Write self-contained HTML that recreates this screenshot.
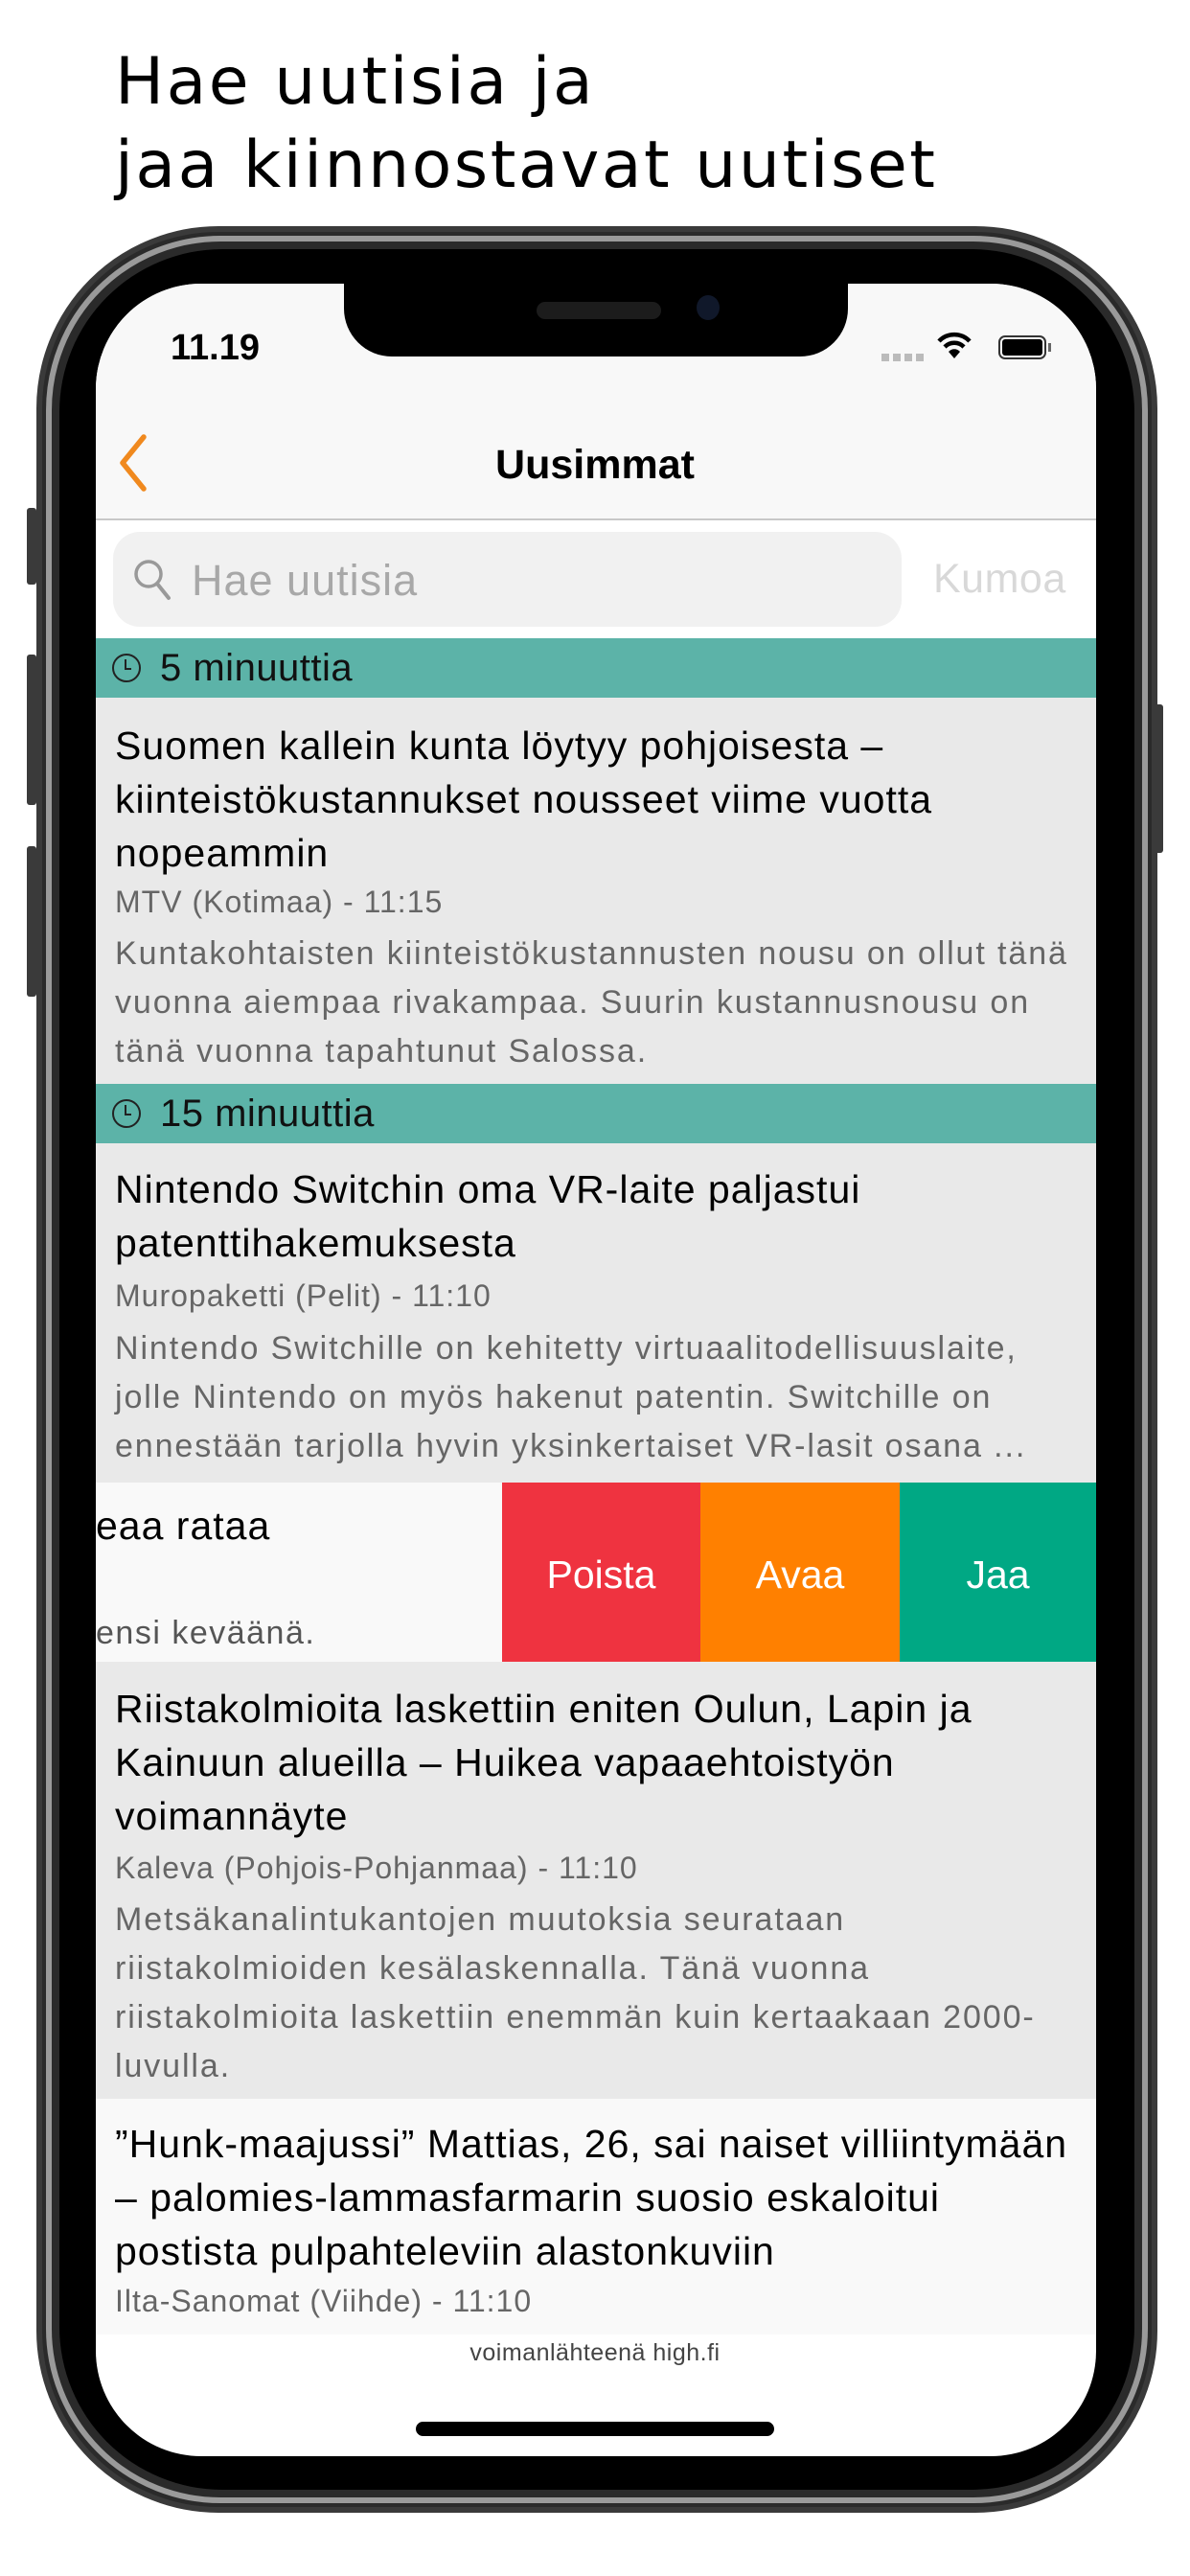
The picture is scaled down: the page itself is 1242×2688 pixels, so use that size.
<!DOCTYPE html>
<html><head><meta charset="utf-8"><style>
*{margin:0;padding:0;box-sizing:border-box}
body{width:1242px;height:2688px;background:#fff;position:relative;overflow:hidden;font-family:"Liberation Sans",sans-serif}
.a{position:absolute}
.h{font-family:"DejaVu Sans",sans-serif;font-size:68px;color:#000;left:120px;white-space:nowrap;letter-spacing:2.5px}
.t{font-size:41px;letter-spacing:1px;color:#000;line-height:56px;left:120px;white-space:nowrap}
.s{font-size:32px;letter-spacing:1px;color:#666;left:120px;white-space:nowrap}
.d{font-size:34px;letter-spacing:1.9px;color:#666;line-height:51px;left:120px;white-space:nowrap}
.sec{left:100px;width:1044px;background:#5cb3a8;height:62px}
.sec span{position:absolute;left:67px;top:9px;font-size:40px;color:#111;letter-spacing:.5px}
.clk{position:absolute;left:17px;top:16px;width:30px;height:30px;border:2.5px solid #222;border-radius:50%}
.clk:after{content:"";position:absolute;left:11px;top:4px;width:5px;height:9px;border-left:2.5px solid #222;border-bottom:2.5px solid #222}
.btn{top:1547px;height:187px;color:#fff;font-size:41px;display:flex;align-items:center;justify-content:center;padding-top:6px}
.sb{background:#3a3a3a;width:10px;border-radius:3px}
</style></head><body>
<div class="a h" style="top:46px">Hae uutisia ja</div>
<div class="a h" style="top:133px">jaa kiinnostavat uutiset</div>

<div class="a sb" style="left:28px;top:530px;height:80px"></div>
<div class="a sb" style="left:28px;top:683px;height:157px"></div>
<div class="a sb" style="left:28px;top:883px;height:157px"></div>
<div class="a sb" style="left:1204px;top:735px;height:155px"></div>

<div class="a" style="left:38px;top:236px;width:1170px;height:2386px;border-radius:190px;background:#2a2a2a;border:6px solid #3a3a3a"></div>
<div class="a" style="left:48px;top:246px;width:1150px;height:2366px;border-radius:182px;border:6px solid #9a9a9a"></div>
<div class="a" style="left:62px;top:260px;width:1122px;height:2338px;border-radius:170px;background:#000"></div>
<div class="a" style="left:100px;top:296px;width:1044px;height:2267px;border-radius:110px;background:#fff;overflow:hidden">
  <div class="a" style="left:0;top:0;width:1044px;height:247px;background:#f8f8f8;border-bottom:2px solid #c8c8c8"></div>
</div>
<div class="a" style="left:359px;top:290px;width:526px;height:82px;background:#000;border-radius:0 0 50px 50px"></div>
<div class="a" style="left:560px;top:315px;width:130px;height:18px;background:#1c1c1c;border-radius:9px"></div>
<div class="a" style="left:727px;top:308px;width:24px;height:26px;background:#10182a;border-radius:50%"></div>

<div class="a" style="left:178px;top:342px;font-size:38px;font-weight:bold;color:#000">11.19</div>
<div class="a" style="left:920px;top:369px;width:46px;height:8px;background:repeating-linear-gradient(90deg,#bbb 0 8px,transparent 8px 12px)"></div>
<svg class="a" style="left:978px;top:346px" width="36" height="30" viewBox="0 0 36 30"><path d="M2 10 A22 22 0 0 1 34 10" stroke="#000" stroke-width="4.5" fill="none"/><path d="M8 16 A14 14 0 0 1 28 16" stroke="#000" stroke-width="4.5" fill="none"/><path d="M18 28 L12 21 A8 8 0 0 1 24 21Z" fill="#000"/></svg>
<div class="a" style="left:1042px;top:350px;width:50px;height:25px;border:2.5px solid #333;border-radius:7px;padding:2px"><div style="width:100%;height:100%;background:#000;border-radius:3px"></div></div>
<div class="a" style="left:1094px;top:358px;width:3px;height:9px;background:#666"></div>

<svg class="a" style="left:120px;top:452px" width="36" height="62" viewBox="0 0 36 62"><path d="M30 4 L8 31 L30 58" stroke="#f0891e" stroke-width="5.5" fill="none" stroke-linecap="round" stroke-linejoin="round"/></svg>
<div class="a" style="left:0;width:1242px;text-align:center;top:461px;font-size:43px;font-weight:bold;color:#000">Uusimmat</div>

<div class="a" style="left:118px;top:555px;width:823px;height:99px;background:#f1f1f1;border-radius:28px"></div>
<svg class="a" style="left:138px;top:582px" width="44" height="46" viewBox="0 0 44 46"><circle cx="17" cy="17" r="13" stroke="#999" stroke-width="3.5" fill="none"/><path d="M26 27 L38 42" stroke="#999" stroke-width="4" stroke-linecap="round"/></svg>
<div class="a" style="left:200px;top:580px;font-size:45px;color:#a8a8a8;letter-spacing:1px">Hae uutisia</div>
<div class="a" style="left:974px;top:580px;font-size:43px;color:#d8d8d8;letter-spacing:.5px">Kumoa</div>

<div class="a sec" style="top:666px"><div class="clk"></div><span>5 minuuttia</span></div>
<div class="a" style="left:100px;top:728px;width:1044px;height:403px;background:#e9e9e9"></div>
<div class="a t" style="top:750px">Suomen kallein kunta löytyy pohjoisesta –<br>kiinteistökustannukset nousseet viime vuotta<br>nopeammin</div>
<div class="a s" style="top:923px">MTV (Kotimaa) - 11:15</div>
<div class="a d" style="top:970px">Kuntakohtaisten kiinteistökustannusten nousu on ollut tänä<br>vuonna aiempaa rivakampaa. Suurin kustannusnousu on<br>tänä vuonna tapahtunut Salossa.</div>

<div class="a sec" style="top:1131px"><div class="clk"></div><span>15 minuuttia</span></div>
<div class="a" style="left:100px;top:1193px;width:1044px;height:354px;background:#e9e9e9"></div>
<div class="a t" style="top:1213px">Nintendo Switchin oma VR-laite paljastui<br>patenttihakemuksesta</div>
<div class="a s" style="top:1334px">Muropaketti (Pelit) - 11:10</div>
<div class="a d" style="top:1382px">Nintendo Switchille on kehitetty virtuaalitodellisuuslaite,<br>jolle Nintendo on myös hakenut patentin. Switchille on<br>ennestään tarjolla hyvin yksinkertaiset VR-lasit osana ...</div>

<div class="a" style="left:100px;top:1547px;width:424px;height:187px;background:#f9f9f9;overflow:hidden">
  <div class="a" style="left:0;top:22px;font-size:41px;letter-spacing:1px;color:#000;white-space:nowrap">eaa rataa</div>
  <div class="a" style="left:0;top:138px;font-size:34px;letter-spacing:1.5px;color:#555;white-space:nowrap">ensi keväänä.</div>
</div>
<div class="a btn" style="left:524px;width:207px;background:#ef3340">Poista</div>
<div class="a btn" style="left:731px;width:208px;background:#ff8000">Avaa</div>
<div class="a btn" style="left:939px;width:205px;background:#00a884">Jaa</div>

<div class="a" style="left:100px;top:1734px;width:1044px;height:456px;background:#e9e9e9"></div>
<div class="a t" style="top:1755px">Riistakolmioita laskettiin eniten Oulun, Lapin ja<br>Kainuun alueilla – Huikea vapaaehtoistyön<br>voimannäyte</div>
<div class="a s" style="top:1931px">Kaleva (Pohjois-Pohjanmaa) - 11:10</div>
<div class="a d" style="top:1978px">Metsäkanalintukantojen muutoksia seurataan<br>riistakolmioiden kesälaskennalla. Tänä vuonna<br>riistakolmioita laskettiin enemmän kuin kertaakaan 2000-<br>luvulla.</div>

<div class="a" style="left:100px;top:2190px;width:1044px;height:246px;background:#f9f9f9"></div>
<div class="a t" style="top:2209px">”Hunk-maajussi” Mattias, 26, sai naiset villiintymään<br>– palomies-lammasfarmarin suosio eskaloitui<br>postista pulpahteleviin alastonkuviin</div>
<div class="a s" style="top:2383px">Ilta-Sanomat (Viihde) - 11:10</div>

<div class="a" style="left:0;width:1242px;text-align:center;top:2441px;font-size:25px;color:#444;letter-spacing:.5px">voimanlähteenä high.fi</div>
<div class="a" style="left:434px;top:2527px;width:374px;height:15px;background:#000;border-radius:8px"></div>
</body></html>
